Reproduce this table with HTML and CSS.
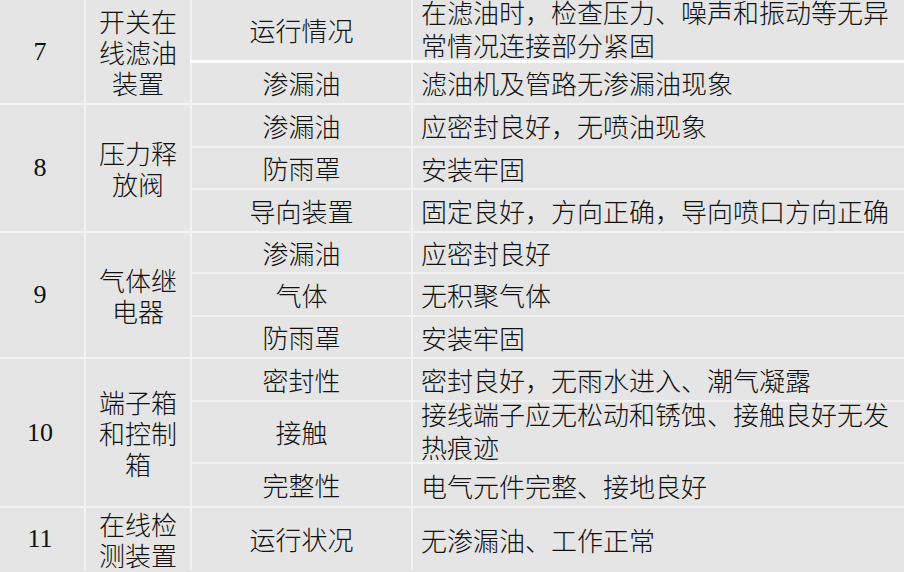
FILE: index.html
```html
<!DOCTYPE html>
<html lang="zh">
<head>
<meta charset="utf-8">
<link rel="stylesheet" href="styles.css">
</head>
<body>
<table class="sheet">
  <colgroup>
    <col class="c-no"><col class="c-part"><col class="c-item"><col class="c-desc">
  </colgroup>
  <tbody>
    <tr class="h61 split">
      <td class="no" rowspan="2">7</td>
      <td class="part" rowspan="2">开关在<br>线滤油<br>装置</td>
      <td class="item">运行情况</td>
      <td class="desc"><div class="tight">在滤油时，检查压力、噪声和振动等无异常情况连接部分紧固</div></td>
    </tr>
    <tr class="h43">
      <td class="item">渗漏油</td>
      <td class="desc">滤油机及管路无渗漏油现象</td>
    </tr>
    <tr class="h43">
      <td class="no" rowspan="3">8</td>
      <td class="part" rowspan="3">压力释<br>放阀</td>
      <td class="item">渗漏油</td>
      <td class="desc">应密封良好，无喷油现象</td>
    </tr>
    <tr class="h42">
      <td class="item">防雨罩</td>
      <td class="desc">安装牢固</td>
    </tr>
    <tr class="h43">
      <td class="item">导向装置</td>
      <td class="desc">固定良好，方向正确，导向喷口方向正确</td>
    </tr>
    <tr class="h41">
      <td class="no" rowspan="3">9</td>
      <td class="part" rowspan="3">气体继<br>电器</td>
      <td class="item">渗漏油</td>
      <td class="desc">应密封良好</td>
    </tr>
    <tr class="h43">
      <td class="item">气体</td>
      <td class="desc">无积聚气体</td>
    </tr>
    <tr class="h42">
      <td class="item">防雨罩</td>
      <td class="desc">安装牢固</td>
    </tr>
    <tr class="h43">
      <td class="no" rowspan="3">10</td>
      <td class="part" rowspan="3">端子箱<br>和控制<br>箱</td>
      <td class="item">密封性</td>
      <td class="desc">密封良好，无雨水进入、潮气凝露</td>
    </tr>
    <tr class="h62">
      <td class="item">接触</td>
      <td class="desc"><div class="tight">接线端子应无松动和锈蚀、接触良好无发热痕迹</div></td>
    </tr>
    <tr class="h44">
      <td class="item">完整性</td>
      <td class="desc">电气元件完整、接地良好</td>
    </tr>
    <tr class="h61">
      <td class="no">11</td>
      <td class="part">在线检<br>测装置</td>
      <td class="item">运行状况</td>
      <td class="desc">无渗漏油、工作正常</td>
    </tr>
  </tbody>
</table>
</body>
</html>
```

FILE: styles.css
```css
html, body {
  margin: 0;
  padding: 0;
  background: #e5e5e5;
}

body {
  width: 904px;
  height: 572px;
  overflow: hidden;
  font-family: "Noto Sans CJK SC", "Noto Sans", sans-serif;
  font-weight: 300;
  color: #111111;
}

.sheet {
  width: 904px;
  table-layout: fixed;
  border-collapse: collapse;
  border-style: hidden;
}

.c-no { width: 85px; }
.c-part { width: 106px; }
.c-item { width: 221px; }
.c-desc { width: 492px; }

.sheet td {
  padding: 0;
  border: 2px solid #f3f3f3;
  vertical-align: middle;
  font-size: 26px;
  line-height: 34px;
}

.sheet td.no {
  text-align: center;
  font-family: "Liberation Serif", "Noto Sans CJK SC", serif;
  font-weight: 400;
  font-size: 26px;
  padding-right: 4px;
}

.sheet td.part {
  text-align: center;
  line-height: 31px;
}

.sheet td.item {
  text-align: center;
}

.sheet td.desc {
  padding-left: 8px;
  padding-right: 4px;
  line-height: 33px;
}

.tight {
  margin: -6px 0 -2px;
}

.split .item,
.split .desc {
  border-bottom: 3px solid #ffffff;
}

.h41 { height: 41px; }
.h42 { height: 42px; }
.h43 { height: 43px; }
.h44 { height: 44px; }
.h61 { height: 61px; }
.h62 { height: 62px; }
```
